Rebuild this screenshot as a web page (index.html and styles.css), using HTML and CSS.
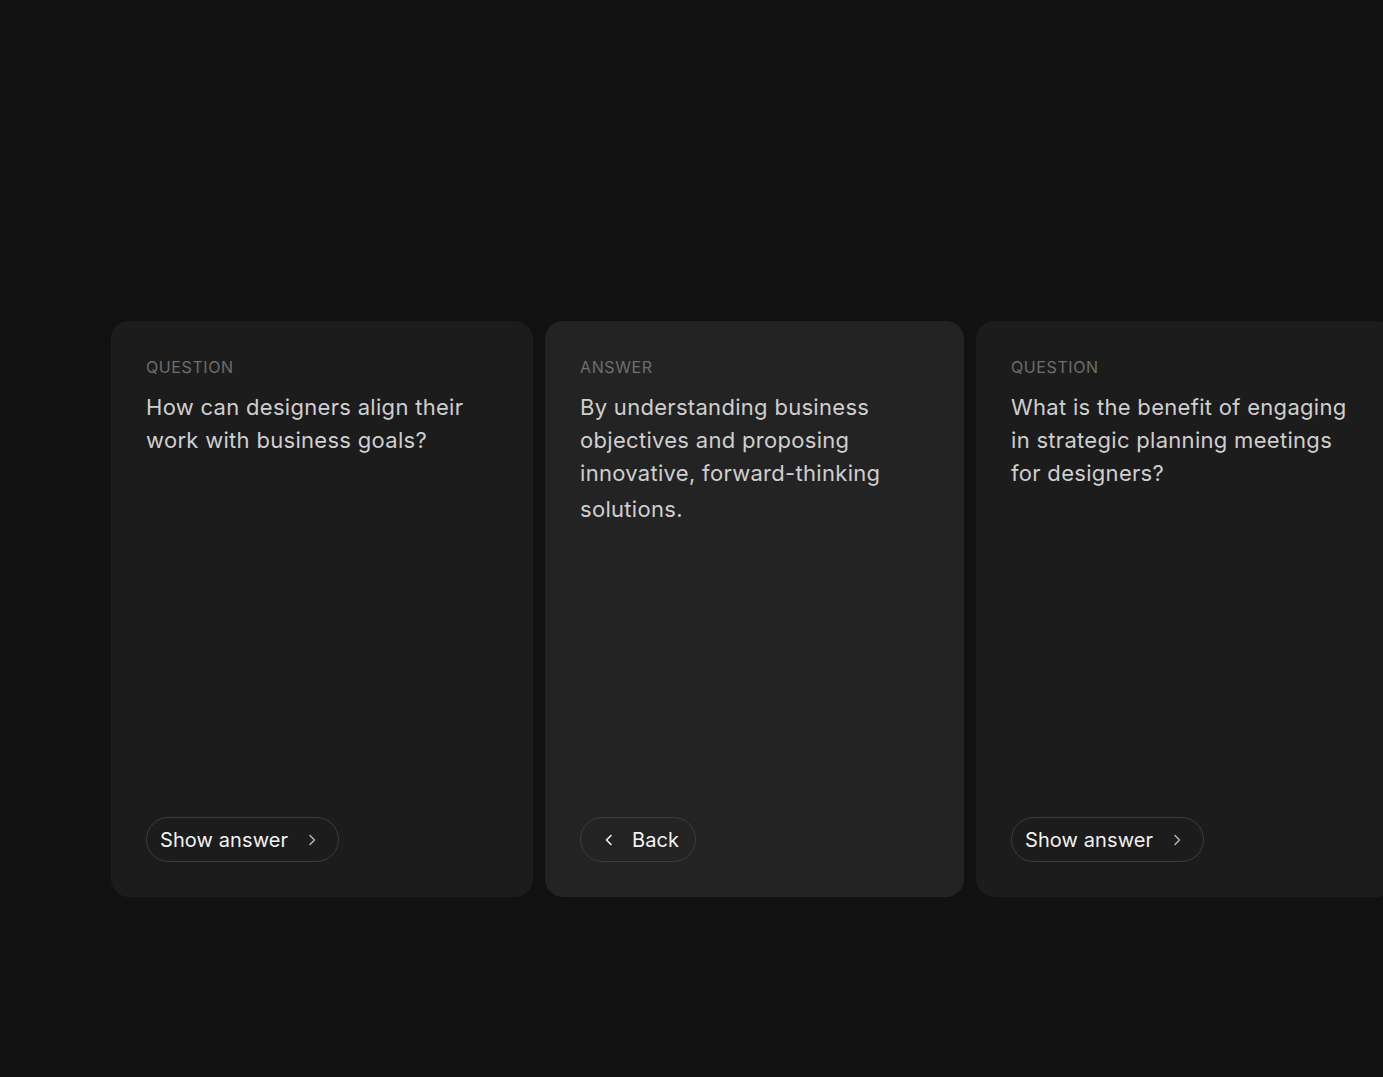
FILE: index.html
```html
<!DOCTYPE html>
<html lang="en">
<head>
<meta charset="utf-8">
<title>Flashcards</title>
<link rel="stylesheet" href="styles.css">
</head>
<body>
<main class="track">
  <section class="card card-first">
    <div class="card-body">
      <div class="label">QUESTION</div>
      <p class="text">How can designers align their work with business goals?</p>
    </div>
    <button class="pill">
      <span>Show answer</span>
      <svg class="chev" width="16" height="16" viewBox="0 0 16 16" fill="none"><path d="M6 3.5L10.5 8L6 12.5" stroke="currentColor" stroke-width="1.6" stroke-linecap="round" stroke-linejoin="round"/></svg>
    </button>
  </section>
  <section class="card card-active">
    <div class="card-body">
      <div class="label">ANSWER</div>
      <p class="text answer">By understanding business objectives and proposing innovative, forward-thinking <span class="last-line">solutions.</span></p>
    </div>
    <button class="pill pill-back">
      <svg class="chev" width="16" height="16" viewBox="0 0 16 16" fill="none"><path d="M10 3.5L5.5 8L10 12.5" stroke="currentColor" stroke-width="1.6" stroke-linecap="round" stroke-linejoin="round"/></svg>
      <span>Back</span>
    </button>
  </section>
  <section class="card">
    <div class="card-body">
      <div class="label">QUESTION</div>
      <p class="text">What is the benefit of engaging in strategic planning meetings for designers?</p>
    </div>
    <button class="pill">
      <span>Show answer</span>
      <svg class="chev" width="16" height="16" viewBox="0 0 16 16" fill="none"><path d="M6 3.5L10.5 8L6 12.5" stroke="currentColor" stroke-width="1.6" stroke-linecap="round" stroke-linejoin="round"/></svg>
    </button>
  </section>
</main>
</body>
</html>
```
FILE: styles.css
```css
html, body {
  margin: 0;
  padding: 0;
  background: #111111;
  height: 100%;
  overflow: hidden;
}
body {
  font-family: Inter, "Noto Sans", sans-serif;
  -webkit-font-smoothing: antialiased;
}
.track {
  display: flex;
  gap: 12px;
  padding-left: 111px;
  margin-top: 321px;
  overflow: hidden;
}
.card {
  flex: 0 0 419px;
  height: 576px;
  box-sizing: border-box;
  background: #1c1c1c;
  border-radius: 18px;
  padding: 35px;
  display: flex;
  flex-direction: column;
  justify-content: space-between;
}
.card-first {
  flex-basis: 422px;
}
.card-active {
  background: #232323;
}
.label {
  font-size: 16px;
  line-height: 22px;
  color: #6e6e6e;
  letter-spacing: 0.6px;
}
.text {
  margin: 13px 0 0;
  max-width: 345px;
  font-size: 22px;
  line-height: 33px;
  color: #cfcfcf;
  letter-spacing: 0.3px;
}
.last-line {
  display: inline-block;
  margin-top: 3px;
}
.pill {
  align-self: flex-start;
  display: inline-flex;
  align-items: center;
  gap: 16px;
  height: 45px;
  box-sizing: border-box;
  padding: 0 18px 0 13px;
  border: 1px solid #3c3c3c;
  border-radius: 999px;
  background: transparent;
  color: #f2f2f2;
  font-family: Inter, "Noto Sans", sans-serif;
  font-size: 20px;
  letter-spacing: 0.1px;
  cursor: pointer;
}
.pill .chev {
  color: #b0b0b0;
}
.pill-back {
  padding: 0 16px 0 20px;
  gap: 15px;
}
.pill-back .chev {
  color: #f2f2f2;
}
```
